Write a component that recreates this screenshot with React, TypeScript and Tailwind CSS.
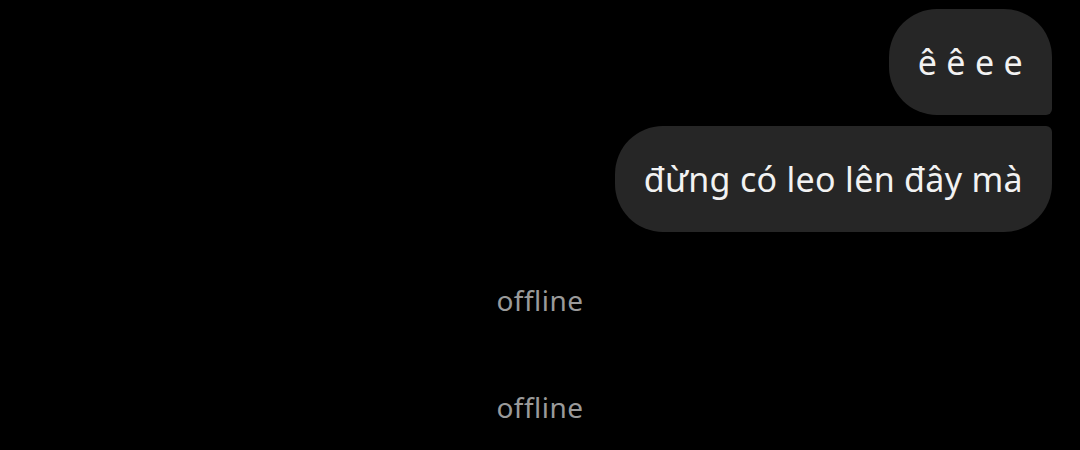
export default function App() {
  const font = { fontFamily: '"Noto Sans", "Open Sans", sans-serif' };
  return (
    <div className="w-[1080px] h-[450px] bg-black overflow-hidden" style={font}>
      <div className="flex flex-col items-end pr-[28px] pt-[9px] gap-[11px]">
        <div className="h-[106px] flex items-center px-[29px] bg-[#262626] text-[#f2f2f2] text-[34px] tracking-[0.3px] rounded-[48px] rounded-br-[6px]">
          ê ê e e
        </div>
        <div className="h-[106px] flex items-center px-[29px] bg-[#262626] text-[#f2f2f2] text-[34px] tracking-[0.3px] rounded-[48px] rounded-tr-[6px]">
          đừng có leo lên đây mà
        </div>
      </div>
      <div className="flex flex-col items-center text-[#9a9a9a] text-[28px] leading-[42px] tracking-[0.5px] mt-[47px] gap-[65px]">
        <div>offline</div>
        <div>offline</div>
      </div>
    </div>
  );
}
